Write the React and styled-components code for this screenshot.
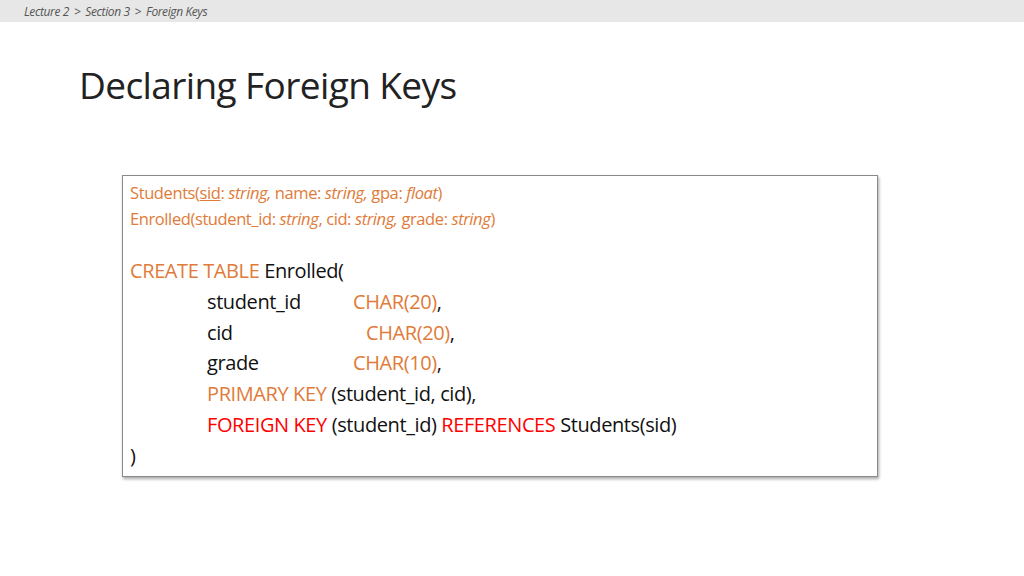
import React from "react";
import styled, { createGlobalStyle } from "styled-components";

const Global = createGlobalStyle`
  body { margin: 0; background: #fff; font-family: "Open Sans", Lato, sans-serif; }
`;
const Page = styled.div`width:1024px;height:576px;display:flex;flex-direction:column;overflow:hidden;`;
const Crumbs = styled.div`height:22px;background:#e7e7e7;display:flex;align-items:center;padding-left:24px;
  font-style:italic;font-size:12px;color:#555;gap:5px;letter-spacing:-0.4px;`;
const Title = styled.h1`margin:39px 0 0 79px;font-weight:400;font-size:37px;color:#222;line-height:48px;letter-spacing:-0.6px;`;
const Box = styled.div`margin:66px 0 0 122px;width:756px;height:302px;box-sizing:border-box;border:1px solid #8a8a8a;
  box-shadow:1px 2px 3px rgba(0,0,0,0.35);padding:4px 7px;`;
const Schema = styled.div`font-size:16.5px;line-height:26px;color:#e07b39;letter-spacing:-0.4px;`;
const Code = styled.div`margin-top:24px;font-size:20px;line-height:30.8px;color:#111;letter-spacing:-0.4px;`;
const Row = styled.div`display:flex;white-space:pre;padding-left:${p=>p.$indent?77:0}px;`;
const Name = styled.span`display:inline-block;width:${p=>p.$w||146}px;`;
const O = styled.span`color:#e07b39;`;
const R = styled.span`color:#f00;`;
const U = styled.span`text-decoration:underline;`;

export default function App(){
  return <Page><Global/>
    <Crumbs><span>Lecture 2</span><span>&gt;</span><span>Section 3</span><span>&gt;</span><span>Foreign Keys</span></Crumbs>
    <Title>Declaring Foreign Keys</Title>
    <Box>
      <Schema>
        <div>Students(<U>sid</U>: <i>string,</i> name: <i>string,</i> gpa: <i>float</i>)</div>
        <div>Enrolled(student_id: <i>string</i>, cid: <i>string,</i> grade: <i>string</i>)</div>
      </Schema>
      <Code>
        <Row><O>CREATE TABLE</O> Enrolled(</Row>
        <Row $indent><Name>student_id</Name><O>CHAR(20)</O>,</Row>
        <Row $indent><Name $w={159}>cid</Name><O>CHAR(20)</O>,</Row>
        <Row $indent><Name>grade</Name><O>CHAR(10)</O>,</Row>
        <Row $indent><O>PRIMARY KEY</O> (student_id, cid),</Row>
        <Row $indent><R>FOREIGN KEY</R> (student_id) <R>REFERENCES</R> Students(sid)</Row>
        <Row>)</Row>
      </Code>
    </Box>
  </Page>;
}
